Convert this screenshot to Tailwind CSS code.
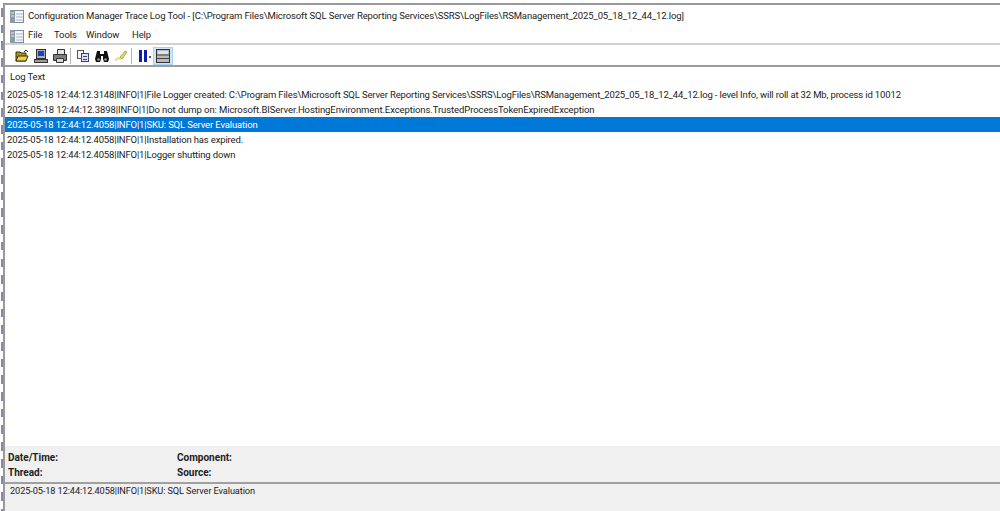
<!DOCTYPE html>
<html lang="en">
<head>
  <meta charset="UTF-8">
  <title>Configuration Manager Trace Log Tool</title>
  <script src="https://cdn.jsdelivr.net/npm/@tailwindcss/browser@4"></script>
</head>
<body class="bg-white overflow-hidden font-['Roboto','Liberation_Sans',sans-serif] text-[#222222] text-[9.5px] tracking-[-0.1px]">
  <div class="w-[1000px] h-[511px] flex overflow-hidden">
    <!-- edge of the window behind -->
    <div class="w-[2px] ml-[1px] h-full shrink-0 bg-[repeating-linear-gradient(180deg,#ffffff_0px,#ffffff_8px,#8a87a8_8px,#8a87a8_16.7px)]"></div>

    <div class="flex-1 min-w-0 pt-[3px]">
      <div class="h-[508px] flex flex-col border-t-2 border-l-2 border-[#999999]">

        <!-- Title -->
        <div class="h-[22px] shrink-0 flex items-center pl-[5px] gap-[4px] tracking-[-0.12px]">
          <svg width="14" height="14" viewBox="0 0 14 14"><rect x="0.5" y="1.5" width="13" height="12" fill="#f4f7fb" stroke="#7d8ba8"/><rect x="0" y="1" width="5" height="13" fill="#8d9aa6"/><path d="M1 4h3M1 7h3" stroke="#e5e9ec"/><path d="M6 5h7M6 8h7M6 11h7" stroke="#a9b6cc"/></svg>
          <span class="whitespace-nowrap">Configuration Manager Trace Log Tool - [C:\Program Files\Microsoft SQL Server Reporting Services\SSRS\LogFiles\RSManagement_2025_05_18_12_44_12.log]</span>
        </div>

        <!-- Menu -->
        <div class="h-[18px] shrink-0 flex items-center pl-[5px] pt-px border-b-2 border-[#d2d2d2]">
          <svg width="14" height="14" viewBox="0 0 14 14"><rect x="0.5" y="1.5" width="13" height="12" fill="#f4f7fb" stroke="#7d8ba8"/><rect x="0" y="1" width="5" height="13" fill="#8d9aa6"/><path d="M1 4h3M1 7h3" stroke="#e5e9ec"/><path d="M6 5h7M6 8h7M6 11h7" stroke="#a9b6cc"/></svg>
          <span class="ml-[4px] w-[26px]">File</span>
          <span class="w-[32px]">Tools</span>
          <span class="w-[46px]">Window</span>
          <span>Help</span>
        </div>

        <!-- Toolbar -->
        <div class="h-[22px] shrink-0 flex items-center pl-[10px] pt-px border-b-2 border-[#9c9c9c]">
          <svg class="mr-[5px]" width="14" height="14" viewBox="0 0 14 14"><path d="M1 3h4l1 1h5v8H1z" fill="#a8912a" stroke="#3d3000"/><path d="M3 7h10l-2 5H1z" fill="#e8cf55" stroke="#3d3000"/><path d="M9 3l2-2 2 2" fill="none" stroke="#222"/></svg>
          <svg class="mr-[5px]" width="14" height="14" viewBox="0 0 14 14"><rect x="2.5" y="0.5" width="9" height="9" fill="#aeb0b3" stroke="#333"/><rect x="4" y="2" width="6" height="5" fill="#1c3fc4"/><rect x="0.5" y="10.5" width="13" height="3" fill="#9c9c9c" stroke="#333"/></svg>
          <svg class="mr-[3px]" width="14" height="14" viewBox="0 0 14 14"><path d="M4.500 0.500h7v5h-7z" fill="#e6e6e6" stroke="#333"/><path d="M0.500 5.500h13v6h-13z" fill="#7e7e7e" stroke="#333"/><path d="M3.500 9.500h7v4h-7z" fill="#d8d8d8" stroke="#333"/></svg>
          <div class="w-px h-[16px] bg-[#b5b5b5] mr-[5px]"></div>
          <svg class="mr-[5px]" width="14" height="14" viewBox="0 0 14 14"><rect x="1.500" y="1.500" width="6" height="8" fill="#f2f2f2" stroke="#555"/><rect x="5.500" y="4.500" width="7" height="8" fill="#dcdff5" stroke="#3c3f8c"/><path d="M7 7.500h4M7 10.500h4" stroke="#3c3f8c"/></svg>
          <svg class="mr-[5px]" width="14" height="14" viewBox="0 0 14 14"><path d="M2 2h3v3h4V2h3l2 8-1 3H9L8 10V7H6v3l-1 3H1L0 10z" fill="#111"/><circle cx="3.500" cy="10.500" r="1.300" fill="#999"/><circle cx="10.500" cy="10.500" r="1.300" fill="#999"/></svg>
          <svg class="mr-[3px]" width="14" height="14" viewBox="0 0 14 14"><path d="M1 10c2 3 3-3 4-1s2 1 3 0" fill="none" stroke="#eadf45" stroke-width="1.500"/><path d="M6 8l5-6 2 1-5 7z" fill="#e9d94a" stroke="#777" stroke-width=".6"/></svg>
          <div class="w-px h-[16px] bg-[#b5b5b5] mr-[7px]"></div>
          <svg width="14" height="14" viewBox="0 0 14 14"><rect x="0" y="1" width="3" height="12" fill="#0a1fb0"/><rect x="5" y="1" width="3" height="12" fill="#0a1fb0"/><rect x="10" y="7" width="2" height="2" fill="#555"/></svg>
          <div class="w-[20px] h-[18px] bg-[#cde6f7] border border-[#a9d2ee] flex items-center justify-center">
            <svg width="14" height="14" viewBox="0 0 14 14"><rect x="0.500" y="0.500" width="13" height="13" fill="#b9b9b9" stroke="#333"/><rect x="2" y="2" width="10" height="3" fill="#e4e4e4"/><path d="M1 6h12M1 9.500h12" stroke="#444"/></svg>
          </div>
        </div>

        <!-- Log list -->
        <div class="flex-1 min-h-0 flex flex-col tracking-[-0.15px]">
          <div class="h-[20px] shrink-0 flex items-center pl-[5px] pt-[1px]">Log Text</div>
          <div class="h-[15px] shrink-0 flex items-center pl-[2px] pt-px whitespace-nowrap">2025-05-18 12:44:12.3148|INFO|1|File Logger created: C:\Program Files\Microsoft SQL Server Reporting Services\SSRS\LogFiles\RSManagement_2025_05_18_12_44_12.log - level Info, will roll at 32 Mb, process id 10012</div>
          <div class="h-[15px] shrink-0 flex items-center pl-[2px] pt-px whitespace-nowrap tracking-[-0.09px]">2025-05-18 12:44:12.3898|INFO|1|Do not dump on: Microsoft.BIServer.HostingEnvironment.Exceptions.TrustedProcessTokenExpiredException</div>
          <div class="h-[15px] shrink-0 flex items-center pl-[2px] pt-px whitespace-nowrap bg-[#0078d7] text-white">2025-05-18 12:44:12.4058|INFO|1|SKU: SQL Server Evaluation</div>
          <div class="h-[15px] shrink-0 flex items-center pl-[2px] pt-px whitespace-nowrap">2025-05-18 12:44:12.4058|INFO|1|Installation has expired.</div>
          <div class="h-[15px] shrink-0 flex items-center pl-[2px] pt-px whitespace-nowrap">2025-05-18 12:44:12.4058|INFO|1|Logger shutting down</div>
        </div>

        <!-- Details -->
        <div class="h-[32px] shrink-0 bg-[#f0f0f0] border-b-2 border-[#a0a0a0] box-content grid grid-cols-[169px_1fr] grid-rows-[15px_15px] pl-[3px] pt-[4px] font-bold items-center text-[10px] tracking-normal">
          <span>Date/Time:</span><span>Component:</span>
          <span>Thread:</span><span>Source:</span>
        </div>
        <div class="h-[27px] shrink-0 bg-[#f0f0f0] pl-[5px] leading-[13px] text-[9.2px]">2025-05-18 12:44:12.4058|INFO|1|SKU: SQL Server Evaluation</div>
      </div>
    </div>
  </div>
</body>
</html>
